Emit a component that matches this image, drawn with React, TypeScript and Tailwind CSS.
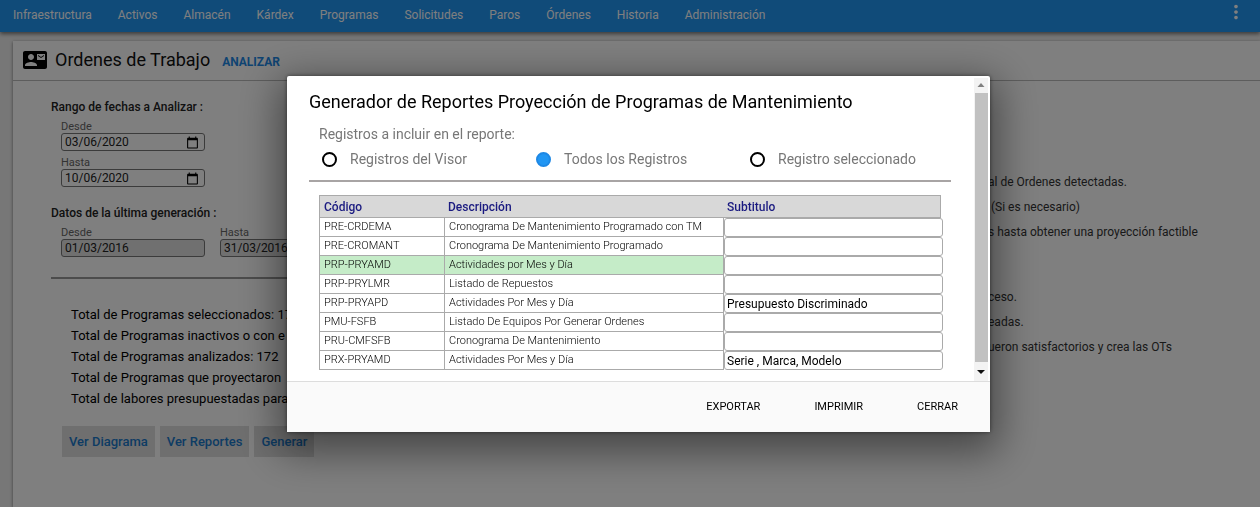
import { MdCalendarToday, MdContactMail, MdMoreVert } from "react-icons/md";

const menu = [
  "Infraestructura",
  "Activos",
  "Almacén",
  "Kárdex",
  "Programas",
  "Solicitudes",
  "Paros",
  "Órdenes",
  "Historia",
  "Administración",
];

const totals = [
  "Total de Programas seleccionados: 172",
  "Total de Programas inactivos o con e",
  "Total de Programas analizados: 172",
  "Total de Programas que proyectaron",
  "Total de labores presupuestadas para",
];

const reports = [
  { code: "PRE-CRDEMA", name: "Cronograma De Mantenimiento Programado con TM", subtitle: "" },
  { code: "PRE-CROMANT", name: "Cronograma De Mantenimiento Programado", subtitle: "" },
  { code: "PRP-PRYAMD", name: "Actividades por Mes y Día", subtitle: "", selected: true },
  { code: "PRP-PRYLMR", name: "Listado de Repuestos", subtitle: "" },
  { code: "PRP-PRYAPD", name: "Actividades Por Mes y Día", subtitle: "Presupuesto Discriminado" },
  { code: "PMU-FSFB", name: "Listado De Equipos Por Generar Ordenes", subtitle: "" },
  { code: "PRU-CMFSFB", name: "Cronograma De Mantenimiento", subtitle: "" },
  { code: "PRX-PRYAMD", name: "Actividades Por Mes y Día", subtitle: "Serie , Marca, Modelo" },
];

const scopes = ["Registros del Visor", "Todos los Registros", "Registro seleccionado"];

function DateField({ id, label, value, disabled = false }: { id: string; label: string; value: string; disabled?: boolean }) {
  return (
    <div className="flex w-36 flex-col">
      <label htmlFor={id} className="text-[11px] leading-3 text-[#666]">
        {label}
      </label>
      <div className={`flex h-[18px] items-center rounded-[3px] border border-[#777] px-[3px] ${disabled ? "bg-[#e0e0e0]" : "bg-white"}`}>
        <input
          id={id}
          type="text"
          defaultValue={value}
          disabled={disabled}
          className="min-w-0 flex-1 bg-transparent text-[12px] leading-4 text-[#222] outline-none"
        />
        {!disabled && (
          <button type="button" aria-label={`Abrir calendario ${label}`} className="mr-[2px] text-black">
            <MdCalendarToday size={13} />
          </button>
        )}
      </div>
    </div>
  );
}

function Page() {
  return (
    <div className="flex min-h-screen flex-col bg-[#eee]">
      <nav className="relative flex h-8 items-center justify-between bg-[#2196f3] pr-4 pb-[2px] pl-[13px] text-white shadow-[0_2px_4px_rgba(0,0,0,0.5)]">
        <div className="flex gap-[26px] text-[12px] leading-4">
          {menu.map((m) => (
            <a key={m} href="#">
              {m}
            </a>
          ))}
        </div>
        <button type="button" aria-label="Más opciones" className="-mr-[3px] pb-[6px]">
          <MdMoreVert size={22} />
        </button>
      </nav>

      <main className="mt-[9px] ml-[13px] flex flex-1 flex-col bg-white shadow-[0_1px_3px_rgba(0,0,0,0.5)]">
        <header className="flex h-10 items-center border-b border-[#bbb] pb-[2px] pl-[10px]">
          <MdContactMail size={24} className="text-black" />
          <h1 className="ml-2 text-[18px] leading-6 text-[#111]">Ordenes de Trabajo</h1>
          <a href="#" className="mt-1 ml-3 text-[12px] leading-4 font-bold text-[#1e88e5]">
            ANALIZAR
          </a>
        </header>

        <div className="flex">
          <section className="w-[937px] shrink-0 pt-[17px] pl-[38px]">
            <h2 className="text-[12px] leading-[18px] font-medium text-[#222]">Rango de fechas a Analizar :</h2>
            <div className="mt-[5px] flex flex-col gap-[6px] pl-[10px]">
              <DateField id="desde" label="Desde" value="03/06/2020" />
              <DateField id="hasta" label="Hasta" value="10/06/2020" />
            </div>
            <h2 className="mt-[17px] text-[12px] leading-[18px] font-medium text-[#222]">Datos de la última generación :</h2>
            <div className="mt-[5px] flex gap-[15px] pl-[10px]">
              <DateField id="gen-desde" label="Desde" value="01/03/2016" disabled />
              <DateField id="gen-hasta" label="Hasta" value="31/03/2016" disabled />
            </div>
            <hr className="mt-5 border-t-2 border-[#999]" />
            <div className="mt-[25px] pl-5 text-[13px] leading-[21px] text-black">
              {totals.map((t) => (
                <p key={t}>{t}</p>
              ))}
            </div>
            <div className="mt-[17px] flex gap-[5px] pl-[11px] text-[13px] font-medium text-[#1a78c8]">
              {["Ver Diagrama", "Ver Reportes", "Generar"].map((b) => (
                <button key={b} type="button" className="h-[31px] bg-[#dedede] px-[7px]">
                  {b}
                </button>
              ))}
            </div>
          </section>
          <section className="pt-[89px] pl-[38px] text-[12px] leading-[25px] text-[#333]">
            <p>al de Ordenes detectadas.</p>
            <p>&nbsp;(Si es necesario)</p>
            <p>s hasta obtener una proyección factible</p>
            <div className="mt-10">
              <p>ceso.</p>
              <p>eadas.</p>
              <p>ueron satisfactorios y crea las OTs</p>
            </div>
          </section>
        </div>
      </main>
    </div>
  );
}

function ScrollBar() {
  return (
    <div aria-hidden="true" className="mt-[2px] mr-[2px] flex w-[14px] flex-col bg-[#f3f3f3]">
      <svg viewBox="0 0 14 15" className="h-[15px] w-[14px]">
        <path d="M3.5 9 L7 5 L10.5 9 Z" fill="#808080" />
      </svg>
      <div className="ml-px flex-1 bg-[#c1c1c1]" />
      <svg viewBox="0 0 14 19" className="h-[19px] w-[14px]">
        <path d="M3 8 L11 8 L7 12 Z" fill="#111" />
      </svg>
    </div>
  );
}

function ReportDialog() {
  return (
    <div
      role="dialog"
      aria-modal="true"
      aria-labelledby="dialog-title"
      className="w-[703px] rounded-[2px] bg-white shadow-[0_12px_40px_8px_rgba(0,0,0,0.45),0_0_4px_rgba(0,0,0,0.5)]"
    >
      <div className="flex">
        <div className="min-w-0 flex-1 pt-4 pr-[23px] pb-[11px] pl-[22px]">
          <h2 id="dialog-title" className="text-[18px] leading-5 text-black">
            Generador de Reportes Proyección de Programas de Mantenimiento
          </h2>
          <fieldset className="mt-3">
            <legend className="pl-[10px] text-[14px] leading-5 text-[#777]">Registros a incluir en el reporte:</legend>
            <div className="mt-[5px] grid grid-cols-3">
              {scopes.map((s, i) => (
                <label key={s} className="flex items-center gap-[13px] pl-[13px] text-[14px] leading-5 whitespace-nowrap text-[#777]">
                  <input
                    type="radio"
                    name="scope"
                    defaultChecked={i === 1}
                    className="size-[15px] shrink-0 appearance-none rounded-full border-2 border-black bg-white checked:border-[#1e88e5] checked:bg-[#2196f3]"
                  />
                  {s}
                </label>
              ))}
            </div>
          </fieldset>
          <hr className="mt-[11px] border-t-2 border-[#a8a4a4]" />
          <table className="mt-[13px] ml-[10px] w-[622px] table-fixed border-separate border-spacing-0 text-left">
            <thead>
              <tr className="h-[23px] bg-[#d8d8d8] text-[12px] leading-4 text-[#1a1a80]">
                <th className="w-[125px] border-y border-l border-[#aaa] py-0 pl-1 font-medium">Código</th>
                <th className="w-[280px] border-y border-[#aaa] py-0 pl-1 font-medium">Descripción</th>
                <th className="border-y border-r border-[#aaa] py-0 pl-[3px] font-medium">Subtitulo</th>
              </tr>
            </thead>
            <tbody className="text-[11px] leading-4 font-light text-black">
              {reports.map((r) => (
                <tr key={r.code} className={r.selected ? "h-[19px] bg-[#c5ecc8]" : "h-[19px]"}>
                  <td className="border-b border-l border-[#aaa] p-0 pl-1">{r.code}</td>
                  <td className="border-x border-b border-[#aaa] p-0 pl-1 whitespace-nowrap">{r.name}</td>
                  <td className="bg-white p-0">
                    <input
                      type="text"
                      aria-label={`Subtitulo ${r.code}`}
                      defaultValue={r.subtitle}
                      className="block h-[19px] w-[calc(100%+2px)] rounded-[3px] border border-[#aaa] bg-white px-[2px] text-[12px] font-normal text-black"
                    />
                  </td>
                </tr>
              ))}
            </tbody>
          </table>
        </div>
        <ScrollBar />
      </div>
      <footer className="flex h-[51px] items-center justify-end gap-[54px] border-t border-[#ddd] bg-[#fafafa] pr-8 text-[11px] text-black">
        <button type="button">EXPORTAR</button>
        <button type="button">IMPRIMIR</button>
        <button type="button">CERRAR</button>
      </footer>
    </div>
  );
}

export default function App() {
  return (
    <div className="font-[Roboto,sans-serif]">
      <Page />
      <div className="fixed inset-0 flex items-start justify-center overflow-hidden bg-black/50 pt-[76px] pl-[17px]">
        <ReportDialog />
      </div>
    </div>
  );
}
